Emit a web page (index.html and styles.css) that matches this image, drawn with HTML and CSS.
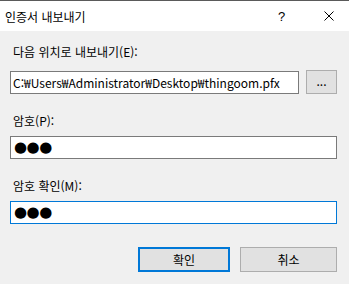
FILE: index.html
```html
<!DOCTYPE html>
<html lang="ko">
<head>
  <meta charset="UTF-8" />
  <title>인증서 내보내기</title>
  <link rel="stylesheet" href="styles.css">
</head>
<body>
  <div class="dialog">
    <!-- Title bar -->
    <div class="titlebar">
      <span class="title">인증서 내보내기</span>
      <span class="help">?</span>
      <span class="close">
        <svg width="10" height="10" viewBox="0 0 10 10">
          <path d="M0.5 0.5 L9.5 9.5 M9.5 0.5 L0.5 9.5" stroke="#000" stroke-width="1" fill="none" />
        </svg>
      </span>
    </div>

    <div class="content">
      <label class="label first">다음 위치로 내보내기(E):</label>
      <div class="path-row">
        <div class="field path">C:₩Users₩Administrator₩Desktop₩thingoom.pfx</div>
        <div class="browse">...</div>
      </div>

      <label class="label">암호(P):</label>
      <div class="field secret">●●●</div>

      <label class="label">암호 확인(M):</label>
      <div class="field secret focused">●●●</div>

      <div class="actions">
        <div class="btn default">확인</div>
        <div class="btn cancel">취소</div>
      </div>
    </div>
  </div>
</body>
</html>
```

FILE: styles.css
```css
body {
  margin: 0;
  padding: 0;
  font-family: "Noto Sans CJK KR", "Noto Sans", sans-serif;
  font-size: 12px;
  color: #000;
  background-color: #f0f0f0;
}

.dialog {
  width: 349px;
  height: 284px;
  overflow: hidden;
}

.titlebar {
  display: flex;
  align-items: center;
  height: 30px;
  border-top: 1px solid #5a5a5a;
  background-color: white;
}

.title {
  flex: 1;
  padding-left: 5px;
  font-size: 12px;
}

.help {
  width: 10px;
  margin-right: 36px;
  font-family: "Liberation Sans", sans-serif;
  font-size: 13px;
}

.close {
  display: flex;
  margin-right: 15px;
}

.content {
  display: flex;
  flex-direction: column;
  padding: 0 12px 0 10px;
}

.label {
  display: block;
  height: 16px;
  line-height: 16px;
  padding-left: 3px;
  margin-top: 19px;
  margin-bottom: 7px;
}

.label.first {
  margin-top: 13px;
  margin-bottom: 10px;
}

.path-row {
  display: flex;
  align-items: center;
  gap: 7px;
}

.field {
  height: 23px;
  line-height: 21px;
  box-sizing: border-box;
  border: 1px solid #7a7a7a;
  background-color: white;
  padding-left: 2px;
  white-space: nowrap;
  overflow: hidden;
}

.path {
  width: 290px;
}

.browse {
  width: 31px;
  height: 24px;
  line-height: 20px;
  box-sizing: border-box;
  border: 1px solid #adadad;
  background-color: #e1e1e1;
  text-align: center;
}

.secret {
  padding-left: 3px;
  font-family: "DejaVu Sans", sans-serif;
  font-size: 15px;
  letter-spacing: -0.5px;
}

.focused {
  border-color: #0078d7;
}

.actions {
  display: flex;
  justify-content: flex-end;
  gap: 10px;
  margin-top: 23px;
}

.btn {
  height: 25px;
  box-sizing: border-box;
  border: 1px solid #adadad;
  background-color: #e1e1e1;
  text-align: center;
  line-height: 21px;
}

.btn.default {
  width: 92px;
  border: 2px solid #0078d7;
}

.btn.cancel {
  width: 97px;
  line-height: 23px;
}
```
